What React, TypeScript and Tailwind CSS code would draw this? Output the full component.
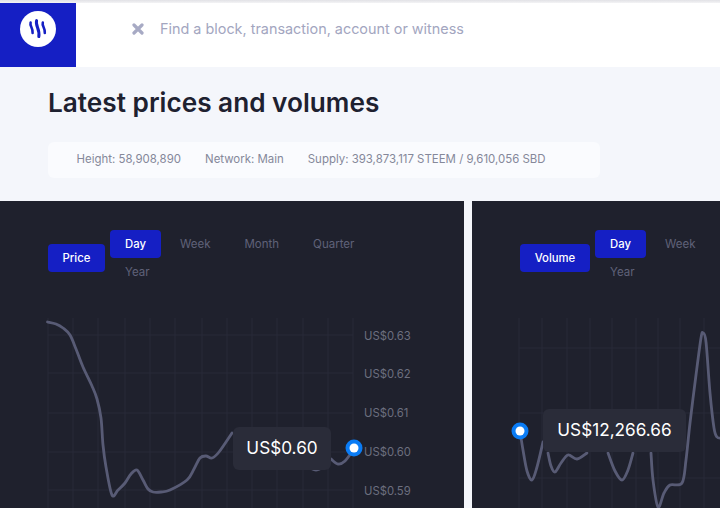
import { Fragment } from "react";

type Point = [number, number];

interface ChartProps {
  viewX: number;
  width: number;
  gridX: number[];
  gridY: number[];
  segments: Point[][];
  marker: Point;
  labels?: { y: number; text: string }[];
  tooltip: { text: string; className: string };
}

// catmull-rom through the points, close enough to the chart lib's monotone curve
function toPath(points: Point[]): string {
  let d = `M${points[0][0]} ${points[0][1]}`;
  for (let i = 0; i < points.length - 1; i++) {
    const p0 = points[Math.max(i - 1, 0)];
    const p1 = points[i];
    const p2 = points[i + 1];
    const p3 = points[Math.min(i + 2, points.length - 1)];
    const c1x = p1[0] + (p2[0] - p0[0]) / 6;
    const c1y = p1[1] + (p2[1] - p0[1]) / 6;
    const c2x = p2[0] - (p3[0] - p1[0]) / 6;
    const c2y = p2[1] - (p3[1] - p1[1]) / 6;
    d += ` C${c1x} ${c1y} ${c2x} ${c2y} ${p2[0]} ${p2[1]}`;
  }
  return d;
}

const PRICE_LINE: Point[][] = [
  [
    [47.5, 322], [56, 324], [63, 328], [70, 335], [76, 349], [83, 367], [92, 386], [97, 399], [101, 418], [103, 445],
    [106, 467], [112, 495], [118, 490], [125, 483], [131, 474], [137, 470], [143, 480], [148, 489], [153, 492],
    [161, 492], [170, 490], [187, 480], [194, 469], [200, 458], [206, 456], [212, 458], [219, 452], [232, 433],
  ],
  [[310, 468], [316, 470], [322, 468]],
  [[331, 459], [338, 464], [345, 461], [354, 449]],
];

const VOLUME_LINE: Point[][] = [
  [[520, 431], [523, 450], [527, 471], [532, 480], [537, 467], [543, 442]],
  [[548, 453], [551, 466], [555, 472], [561, 463], [568, 455], [577, 459], [587, 453]],
  [[608, 453], [615, 471], [622, 480], [628, 470], [633, 453]],
  [[651, 453], [653, 480], [658, 507], [664, 493], [670, 485], [682, 483], [686, 460], [690, 423], [696, 375], [701, 338], [703, 333], [706, 342], [710, 393], [714, 428], [717, 437], [722, 438]],
];

function Chart({ viewX, width, gridX, gridY, segments, marker, labels, tooltip }: ChartProps) {
  return (
    <div className="relative h-[190px]" style={{ width }}>
      <svg width={width} height={190} viewBox={`${viewX} 318 ${width} 190`} className="block overflow-visible">
        {gridX.map((x) => (
          <line key={x} x1={x} x2={x} y1={318} y2={508} stroke="#292b38" strokeWidth={1} />
        ))}
        {gridY.map((y) => (
          <line key={y} x1={gridX[0]} x2={gridX[gridX.length - 1]} y1={y} y2={y} stroke="#292b38" strokeWidth={1} />
        ))}
        {segments.map((s, i) => (
          <path key={i} d={toPath(s)} fill="none" stroke="#585b75" strokeWidth={2.8} strokeLinecap="round" />
        ))}
        {labels?.map((l) => (
          <text key={l.text} x={364} y={l.y + 5} fontSize={11.3} fill="#6c6f7f">
            {l.text}
          </text>
        ))}
        <circle cx={marker[0]} cy={marker[1]} r={8.5} fill="#0a7cf5" />
        <circle cx={marker[0]} cy={marker[1]} r={4.5} fill="#ffffff" />
      </svg>
      <div className={`absolute flex items-center justify-center rounded-md bg-[#2a2c39] pb-[2px] text-[17.2px] text-white ${tooltip.className}`}>
        {tooltip.text}
      </div>
    </div>
  );
}

function ChartPanel({
  button,
  buttonWidth,
  tabs,
  tabsWidth,
  children,
  className,
}: {
  button: string;
  buttonWidth: string;
  tabs: string[];
  tabsWidth: string;
  children: React.ReactNode;
  className: string;
}) {
  return (
    <section className={`h-[307px] overflow-hidden bg-[#1f212d] pl-12 pt-[29px] ${className}`}>
      <div className="flex items-center gap-[5px]">
        <button className={`flex h-7 shrink-0 items-center justify-center rounded bg-[#151fc4] text-[11.3px] font-medium text-white ${buttonWidth}`}>
          {button}
        </button>
        <div className={`flex shrink-0 flex-wrap gap-x-1 ${tabsWidth}`}>
          {tabs.map((tab, i) => (
            <span
              key={tab}
              className={
                i === 0
                  ? "flex h-7 w-[51px] items-center justify-center rounded bg-[#151fc4] pt-px text-[11.3px] font-medium text-white"
                  : "flex h-7 items-center px-[15px] pt-px text-[11.5px] text-[#5f6279]"
              }
            >
              {tab}
            </span>
          ))}
        </div>
      </div>
      <div className="mt-[32px]">{children}</div>
    </section>
  );
}

export default function App() {
  return (
    <div className="h-[508px] w-[720px] overflow-hidden bg-[#f4f6fb] font-['Inter',sans-serif]">
      <div className="h-[3px] bg-gradient-to-b from-[#e2e2e6] to-[#f3f3f5]" />
      <header className="flex h-16 bg-white">
        <div className="flex w-[76px] shrink-0 items-center justify-center bg-[#151fc4] pb-3">
          <div className="flex h-9 w-9 items-center justify-center rounded-full bg-white">
            <svg width="22" height="22" viewBox="0 0 22 22" fill="none" stroke="#151fc4" strokeLinecap="round">
              <path d="M3.6 4.6C2.4 8 6.4 10.4 5.6 15" strokeWidth="2.6" />
              <path d="M9.6 2.6C8 7.4 13.2 11.4 11.8 18.6" strokeWidth="3" />
              <path d="M15.8 4.6C14.6 8 18.6 10.4 17.8 15" strokeWidth="2.6" />
            </svg>
          </div>
        </div>
        <div className="flex items-center pb-3">
          <svg width="12" height="12" viewBox="0 0 12 12" className="ml-[56px]" stroke="#a7aac4" strokeWidth="3.2" strokeLinecap="round">
            <path d="M2 2L10 10M10 2L2 10" />
          </svg>
          <span className="ml-[16px] text-[14.4px] text-[#a3a6bf]">Find a block, transaction, account or witness</span>
        </div>
      </header>

      <main>
        <div className="px-12 pt-[18px]">
          <h1 className="text-[26.2px] leading-9 font-semibold text-[#1e2130]">Latest prices and volumes</h1>
          <div className="mt-[21px] flex h-9 w-[552px] items-center gap-6 rounded-md bg-[#fafbfe] pl-[28.5px] text-[11.45px] text-[#85889a]">
            <span>Height: 58,908,890</span>
            <span>Network: Main</span>
            <span>Supply: 393,873,117 STEEM / 9,610,056 SBD</span>
          </div>
        </div>

        <div className="mt-[23px] flex gap-2">
          <ChartPanel
            className="w-[464px] shrink-0"
            button="Price"
            buttonWidth="w-[57px]"
            tabs={["Day", "Week", "Month", "Quarter", "Year"]}
            tabsWidth="w-[270px]"
          >
            <Fragment>
              <Chart
                viewX={48}
                width={416}
                gridX={[48, 73, 98, 125, 150, 175, 202, 227, 252, 277, 303, 328, 353]}
                gridY={[335, 373, 413, 452, 490]}
                segments={PRICE_LINE}
                marker={[354, 448]}
                labels={[
                  { y: 335, text: "US$0.63" },
                  { y: 373, text: "US$0.62" },
                  { y: 412, text: "US$0.61" },
                  { y: 451, text: "US$0.60" },
                  { y: 490, text: "US$0.59" },
                ]}
                tooltip={{ text: "US$0.60", className: "left-[185px] top-[109px] h-[43px] w-[98px]" }}
              />
            </Fragment>
          </ChartPanel>
          <ChartPanel
            className="min-w-0 flex-1"
            button="Volume"
            buttonWidth="w-[70px]"
            tabs={["Day", "Week", "Year"]}
            tabsWidth="w-[120px]"
          >
            <Chart
              viewX={520}
              width={200}
              gridX={[519, 542, 567, 590, 612, 636, 658, 680, 704, 728]}
              gridY={[348, 413, 478]}
              segments={VOLUME_LINE}
              marker={[520, 431]}
              tooltip={{ text: "US$12,266.66", className: "left-[23px] top-[91px] h-[43px] w-[143px]" }}
            />
          </ChartPanel>
        </div>
      </main>
    </div>
  );
}
